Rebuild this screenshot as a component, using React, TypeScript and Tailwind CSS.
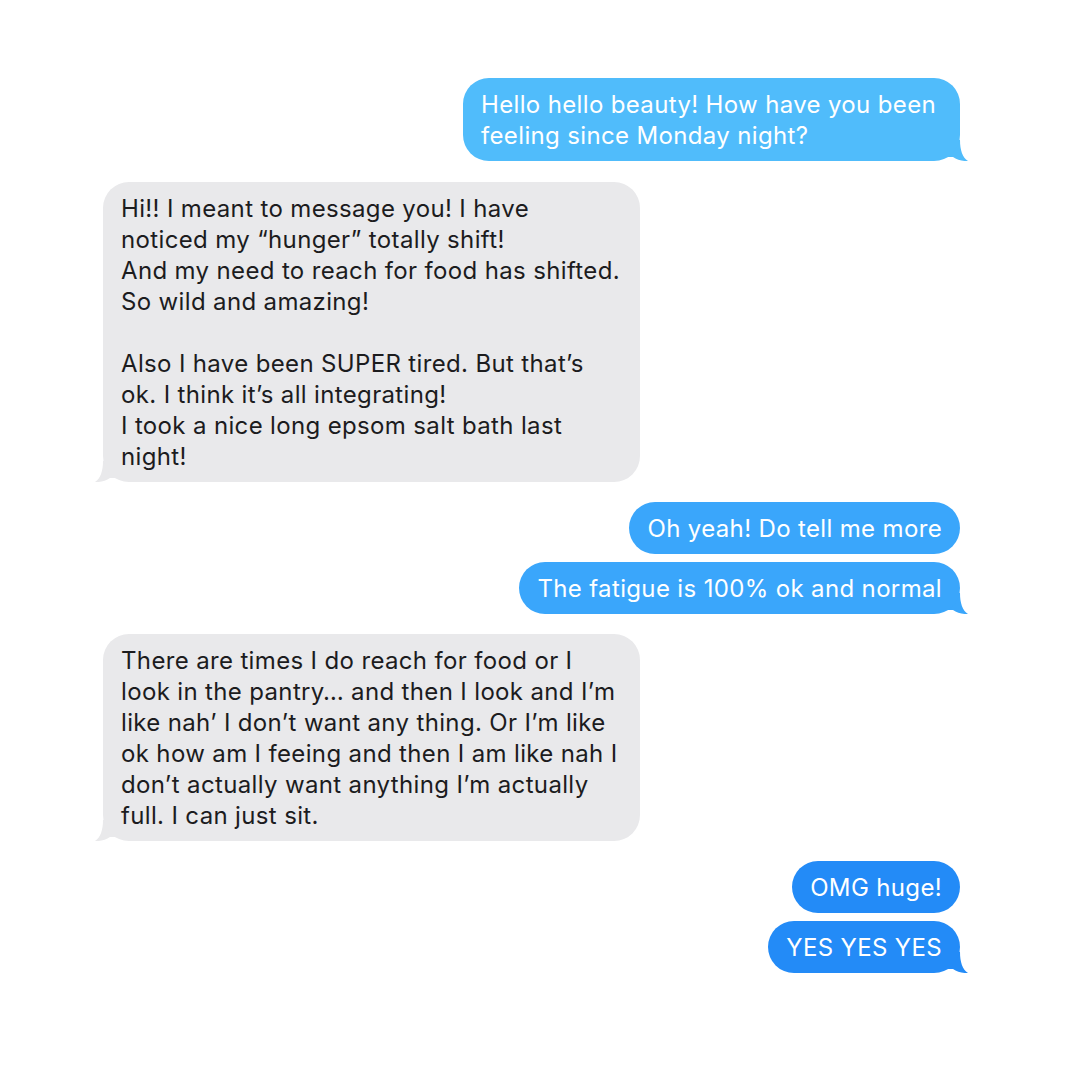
import type { ReactNode } from 'react'

type Side = 'sent' | 'received'

interface BubbleProps {
  side: Side
  color: string
  tail?: boolean
  width?: string
  children: ReactNode
}

// iMessage-style tail, drawn for the right side and mirrored for the left
function Tail({ side, color }: { side: Side; color: string }) {
  return (
    <svg
      width="24"
      height="22"
      viewBox="0 0 24 22"
      className={side === 'sent' ? 'absolute -right-2 bottom-0' : 'absolute -left-2 bottom-0 -scale-x-100'}
    >
      <path d="M16 1 C16 11 18.5 18.5 24 22 C19 22.4 13 21 9 18 L0 18 L0 0 Z" fill={color} />
    </svg>
  )
}

function Bubble({ side, color, tail, width, children }: BubbleProps) {
  const textColor = side === 'sent' ? 'text-white' : 'text-[#1c1c1e]'
  return (
    <div className={`relative ${width ?? ''}`}>
      {tail && <Tail side={side} color={color} />}
      <div
        className={`relative rounded-[26px] px-[18px] py-[10.5px] text-[24px] leading-[31px] tracking-[0.35px] ${textColor}`}
        style={{ background: color }}
      >
        {children}
      </div>
    </div>
  )
}

function Lines({ lines }: { lines: string[] }) {
  return (
    <>
      {lines.map((l, i) => (
        <div key={i} className="whitespace-nowrap min-h-[31px]">
          {l}
        </div>
      ))}
    </>
  )
}

const BLUE_1 = '#50bcfb'
const BLUE_2 = '#3aa6fb'
const BLUE_3 = '#238bf7'
const GRAY = '#e9e9eb'

export default function App() {
  return (
    <div
      className="w-[1080px] h-[1080px] bg-white pt-[78px] pl-[103px] pr-[120px] flex flex-col"
      style={{ fontFamily: 'Inter, "Noto Sans", sans-serif' }}
    >
      <div className="flex justify-end">
        <Bubble side="sent" color={BLUE_1} tail width="w-[497px]">
          <Lines lines={['Hello hello beauty! How have you been', 'feeling since Monday night?']} />
        </Bubble>
      </div>

      <div className="flex justify-start mt-[21px]">
        <Bubble side="received" color={GRAY} tail width="w-[537px]">
          <Lines
            lines={[
              'Hi!! I meant to message you! I have',
              'noticed my \u201chunger\u201d totally shift!',
              'And my need to reach for food has shifted.',
              'So wild and amazing!',
              '',
              'Also I have been SUPER tired. But that\u2019s',
              'ok. I think it\u2019s all integrating!',
              'I took a nice long epsom salt bath last',
              'night!',
            ]}
          />
        </Bubble>
      </div>

      <div className="flex flex-col items-end gap-2 mt-[20px]">
        <Bubble side="sent" color={BLUE_2}>
          <Lines lines={['Oh yeah! Do tell me more']} />
        </Bubble>
        <Bubble side="sent" color={BLUE_2} tail>
          <Lines lines={['The fatigue is 100% ok and normal']} />
        </Bubble>
      </div>

      <div className="flex justify-start mt-[20px]">
        <Bubble side="received" color={GRAY} tail width="w-[537px]">
          <Lines
            lines={[
              'There are times I do reach for food or I',
              'look in the pantry\u2026 and then I look and I\u2019m',
              'like nah\u2019 I don\u2019t want any thing. Or I\u2019m like',
              'ok how am I feeing and then I am like nah I',
              'don\u2019t actually want anything I\u2019m actually',
              'full. I can just sit.',
            ]}
          />
        </Bubble>
      </div>

      <div className="flex flex-col items-end gap-2 mt-[20px]">
        <Bubble side="sent" color={BLUE_3}>
          <Lines lines={['OMG huge!']} />
        </Bubble>
        <Bubble side="sent" color={BLUE_3} tail>
          <Lines lines={['YES YES YES']} />
        </Bubble>
      </div>
    </div>
  )
}
